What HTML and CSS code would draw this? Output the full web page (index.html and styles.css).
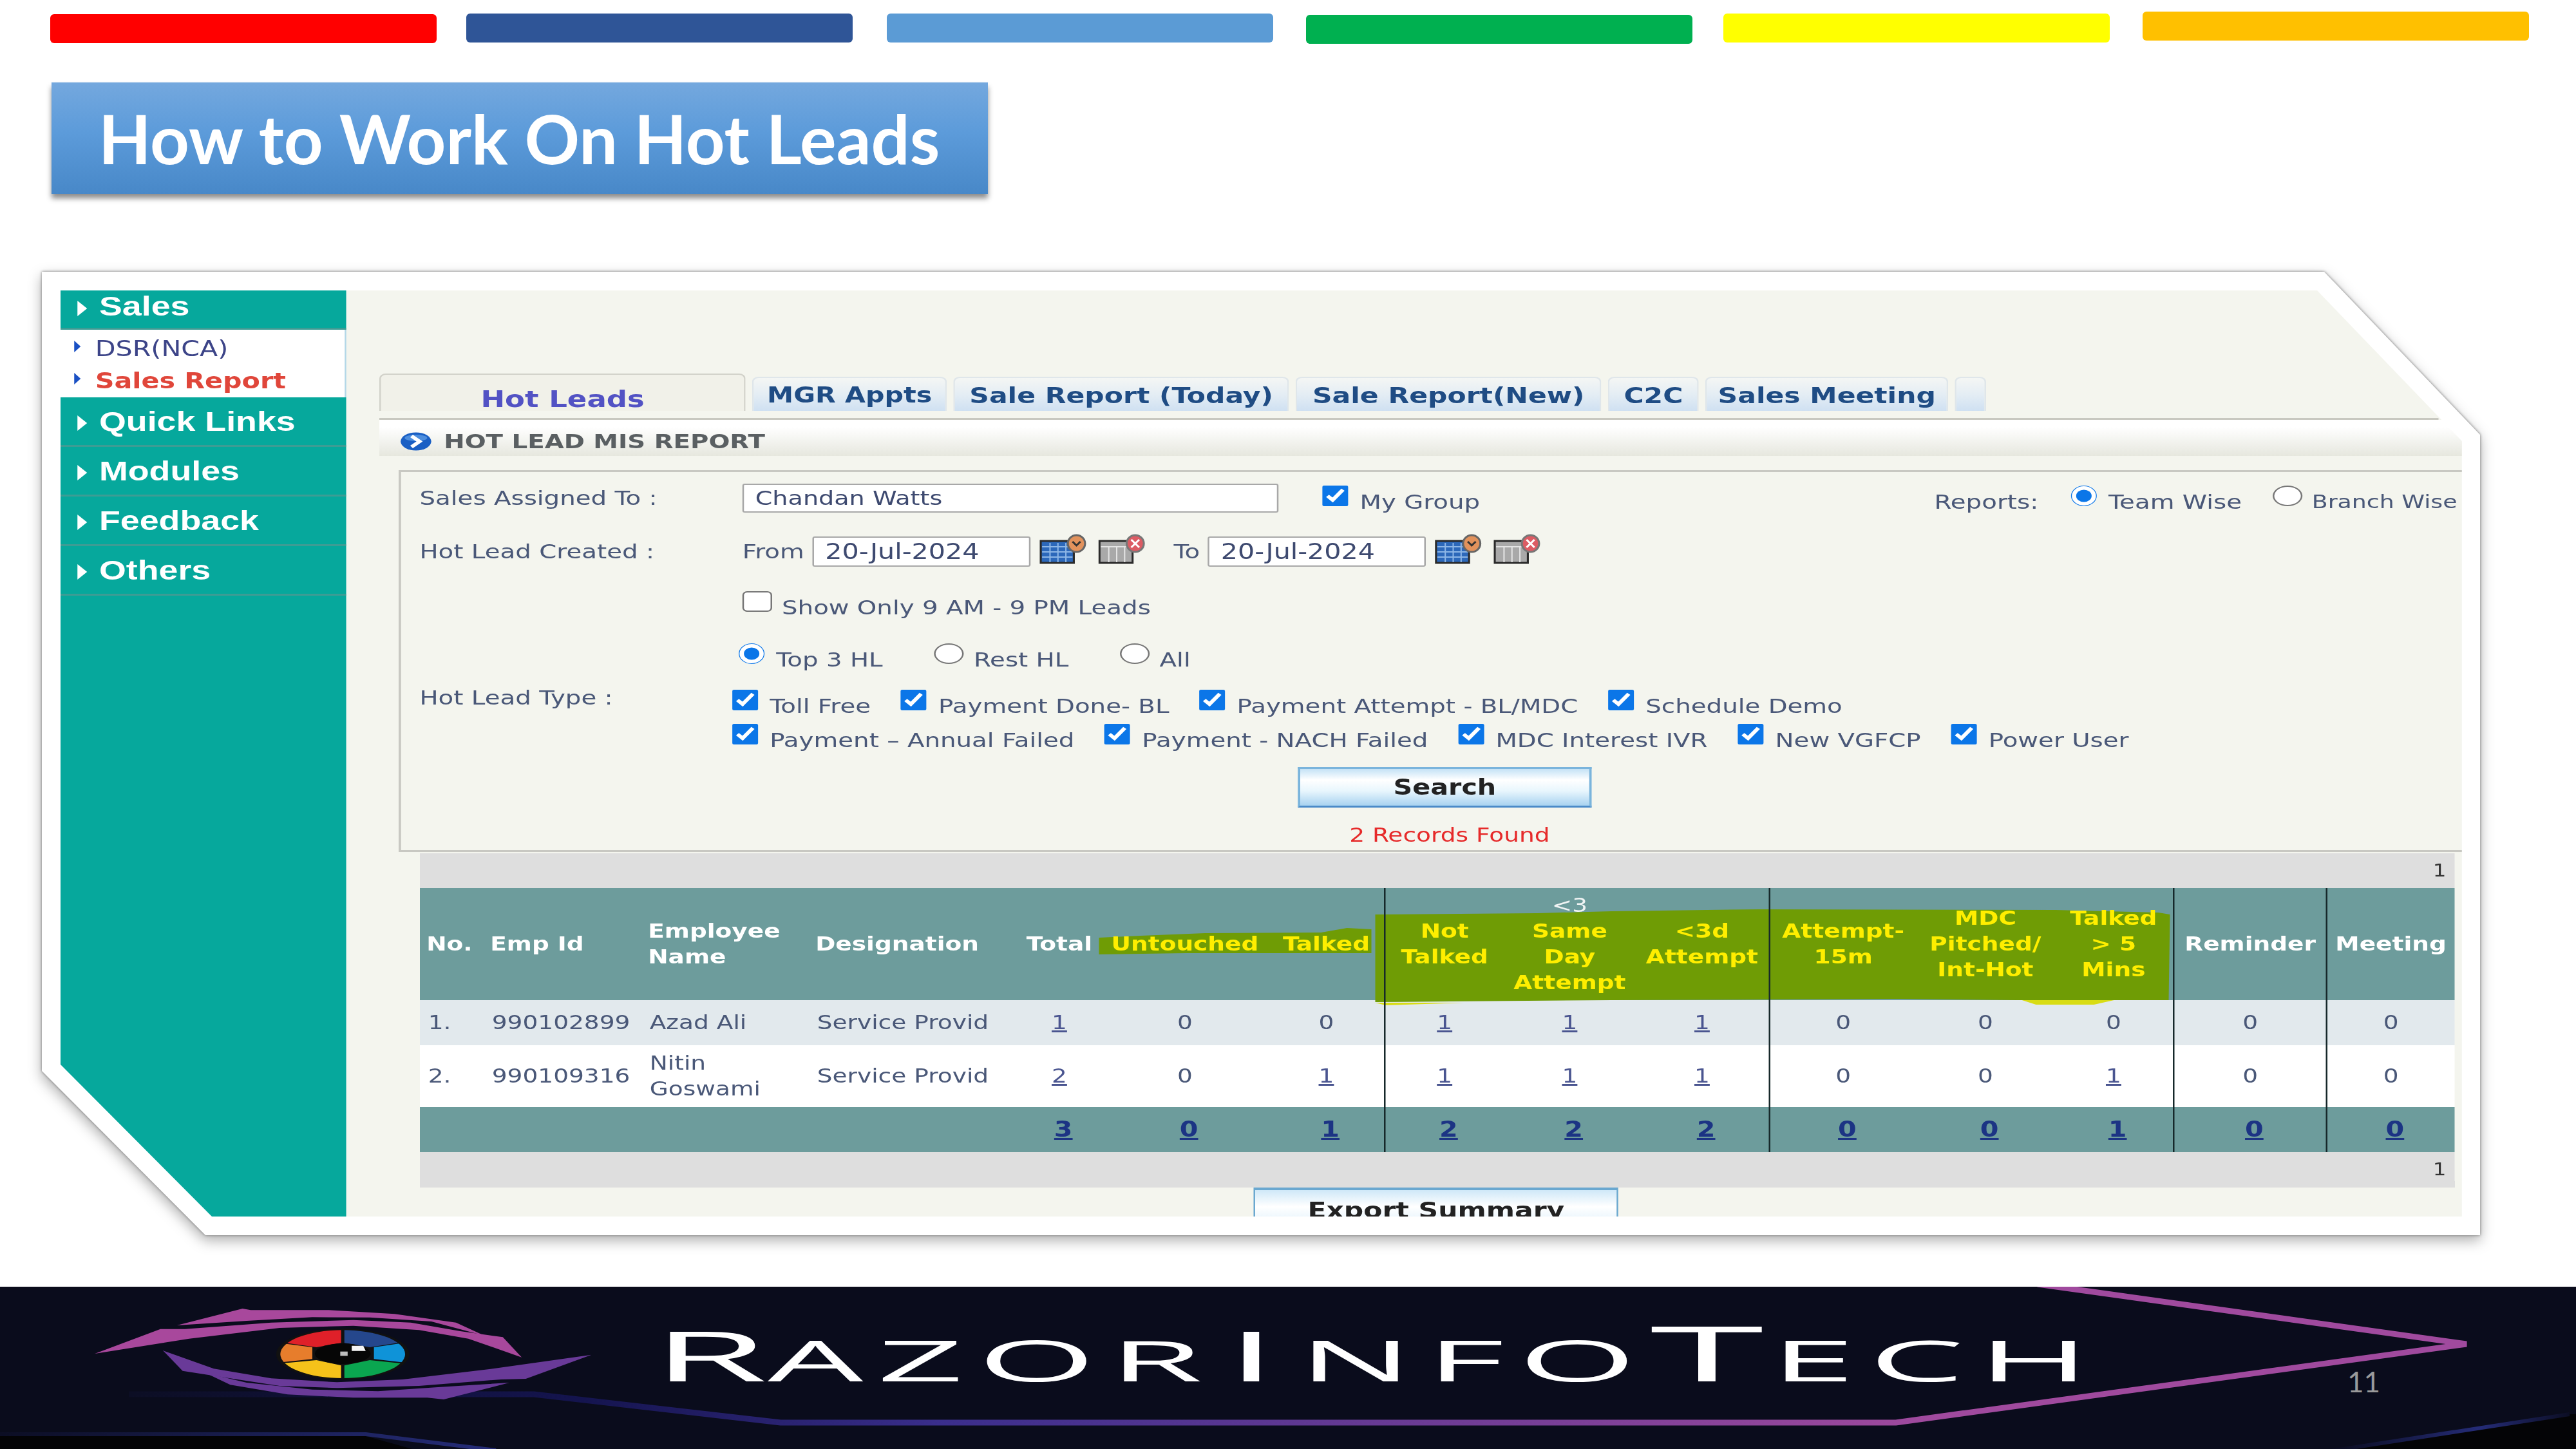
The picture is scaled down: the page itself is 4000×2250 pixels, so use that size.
FILE: index.html
```html
<!DOCTYPE html>
<html>
<head>
    <meta charset="UTF-8">
    <title>How to Work On Hot Leads</title>
    <link rel="stylesheet" href="styles.css">
</head>
<body>
<div class="slide">
    <div class="bars">
        <div class="bar bar-red"></div>
        <div class="bar bar-navy"></div>
        <div class="bar bar-sky"></div>
        <div class="bar bar-green"></div>
        <div class="bar bar-yellow"></div>
        <div class="bar bar-amber"></div>
    </div>

    <h1 class="title">How to Work On Hot Leads</h1>

    <div class="panel">
        <div class="panel-cut">
            <div class="shot">
                <div class="shot-body">
                    <!-- left menu -->
                    <div class="side">
                        <div class="side-item side-first"><span class="tri"></span>Sales</div>
                        <div class="side-sub">
                            <div class="sub-item"><span class="tri-small"></span>DSR(NCA)</div>
                            <div class="sub-item sub-on"><span class="tri-small"></span>Sales Report</div>
                        </div>
                        <div class="side-item"><span class="tri"></span>Quick Links</div>
                        <div class="side-item"><span class="tri"></span>Modules</div>
                        <div class="side-item"><span class="tri"></span>Feedback</div>
                        <div class="side-item"><span class="tri"></span>Others</div>
                    </div>

                    <div class="main">
                        <div class="tabs">
                            <div class="tab tab-on">Hot Leads</div>
                            <div class="tab tab-mgr">MGR Appts</div>
                            <div class="tab tab-today">Sale Report (Today)</div>
                            <div class="tab tab-new">Sale Report(New)</div>
                            <div class="tab tab-c2c">C2C</div>
                            <div class="tab tab-meet">Sales Meeting</div>
                            <div class="tab tab-empty"></div>
                        </div>
                        <div class="tab-rule"></div>
                        <div class="report-title">
                            <svg class="go-icon" viewBox="0 0 39 29">
                                <ellipse cx="19.5" cy="14.5" rx="19" ry="14" fill="#1a5fc4"/>
                                <ellipse cx="19.5" cy="9" rx="14" ry="5" fill="#4d8ede"/>
                                <path d="M14 6 L24 14.5 L14 23" fill="none" stroke="#fff" stroke-width="5"/>
                            </svg>
                            HOT LEAD MIS REPORT
                        </div>

                        <div class="form-box">
                            <div class="frow frow-1">
                                <div class="flabel">Sales Assigned To :</div>
                                <div class="text-box box-name">Chandan Watts</div>
                                <label class="opt opt-group"><input type="checkbox" checked>My Group</label>
                                <div class="reports">
                                    <span>Reports:</span>
                                    <label class="opt"><input type="radio" name="rep" checked>Team Wise</label>
                                    <label class="opt opt-branch"><input type="radio" name="rep">Branch Wise</label>
                                </div>
                            </div>
                            <div class="frow frow-2">
                                <div class="flabel">Hot Lead Created :</div>
                                <span>From</span>
                                <div class="text-box box-date">20-Jul-2024</div>
                                <svg class="cal" viewBox="0 0 73 47" preserveAspectRatio="none">
                                    <rect x="2" y="11" width="50" height="34" fill="#2c68ba" stroke="#2a2a2a" stroke-width="3"/>
                                    <path d="M4 20H50M4 28H50M4 36H50M16 14V44M28 14V44M40 14V44" stroke="#8db6e6" stroke-width="2"/>
                                    <circle cx="56" cy="15" r="13" fill="#e2925c" stroke="#666" stroke-width="3"/>
                                    <path d="M50 12 L56 18 L62 12" fill="none" stroke="#333" stroke-width="3"/>
                                </svg>
                                <svg class="cal cal-x" viewBox="0 0 73 47" preserveAspectRatio="none">
                                    <rect x="2" y="11" width="50" height="34" fill="#a9a9a9" stroke="#2a2a2a" stroke-width="3"/>
                                    <path d="M4 20H50M16 20V44M28 20V44M40 20V44" stroke="#e4e4e4" stroke-width="2"/>
                                    <circle cx="56" cy="15" r="13" fill="#dc5c64" stroke="#777" stroke-width="3"/>
                                    <path d="M50 9 L62 21 M62 9 L50 21" fill="none" stroke="#fff" stroke-width="3"/>
                                </svg>
                                <span class="to-label">To</span>
                                <div class="text-box box-date">20-Jul-2024</div>
                                <svg class="cal" viewBox="0 0 73 47" preserveAspectRatio="none">
                                    <rect x="2" y="11" width="50" height="34" fill="#2c68ba" stroke="#2a2a2a" stroke-width="3"/>
                                    <path d="M4 20H50M4 28H50M4 36H50M16 14V44M28 14V44M40 14V44" stroke="#8db6e6" stroke-width="2"/>
                                    <circle cx="56" cy="15" r="13" fill="#e2925c" stroke="#666" stroke-width="3"/>
                                    <path d="M50 12 L56 18 L62 12" fill="none" stroke="#333" stroke-width="3"/>
                                </svg>
                                <svg class="cal cal-x" viewBox="0 0 73 47" preserveAspectRatio="none">
                                    <rect x="2" y="11" width="50" height="34" fill="#a9a9a9" stroke="#2a2a2a" stroke-width="3"/>
                                    <path d="M4 20H50M16 20V44M28 20V44M40 20V44" stroke="#e4e4e4" stroke-width="2"/>
                                    <circle cx="56" cy="15" r="13" fill="#dc5c64" stroke="#777" stroke-width="3"/>
                                    <path d="M50 9 L62 21 M62 9 L50 21" fill="none" stroke="#fff" stroke-width="3"/>
                                </svg>
                            </div>
                            <div class="frow frow-3">
                                <div class="flabel"></div>
                                <label class="opt"><input type="checkbox">Show Only 9 AM - 9 PM Leads</label>
                            </div>
                            <div class="frow frow-4">
                                <div class="flabel"></div>
                                <div class="opt-line opt-radios">
                                    <label class="opt"><input type="radio" name="top" checked>Top 3 HL</label>
                                    <label class="opt"><input type="radio" name="top">Rest HL</label>
                                    <label class="opt"><input type="radio" name="top">All</label>
                                </div>
                            </div>
                            <div class="frow frow-5">
                                <div class="flabel flabel-type">Hot Lead Type :</div>
                                <div class="opt-lines">
                                    <div class="opt-line line-a">
                                        <label class="opt"><input type="checkbox" checked>Toll Free</label>
                                        <label class="opt"><input type="checkbox" checked>Payment Done- BL</label>
                                        <label class="opt"><input type="checkbox" checked>Payment Attempt - BL/MDC</label>
                                        <label class="opt"><input type="checkbox" checked>Schedule Demo</label>
                                    </div>
                                    <div class="opt-line line-b">
                                        <label class="opt"><input type="checkbox" checked>Payment – Annual Failed</label>
                                        <label class="opt"><input type="checkbox" checked>Payment - NACH Failed</label>
                                        <label class="opt"><input type="checkbox" checked>MDC Interest IVR</label>
                                        <label class="opt"><input type="checkbox" checked>New VGFCP</label>
                                        <label class="opt"><input type="checkbox" checked>Power User</label>
                                    </div>
                                </div>
                            </div>
                            <div class="btn btn-search">Search</div>
                            <div class="found">2 Records Found</div>
                        </div>

                        <div class="grid">
                            <svg class="marker" viewBox="0 0 3160 240" preserveAspectRatio="none">
                                <path d="M1484 232 L1622 232 L1500 236 Z" fill="#d8dc14"/>
                                <path d="M2482 226 L2640 226 L2600 235 L2510 235 Z" fill="#d8dc14"/>
                                <path d="M1055 131 L1120 128 L1220 124 L1400 123 L1440 116 L1478 118 L1478 155 L1190 155 L1055 157 Z" fill="#6f9c05"/>
                                <path d="M1484 95 L1736 93 L1851 90 L2000 88 L2080 87 L2539 88 L2700 92 L2718 95 L2716 228 L2480 228 L2300 226 L1851 228 L1600 230 L1484 231 Z" fill="#6f9c05"/>
                            </svg>
                            <div class="pager">1</div>
                            <div class="row row-head">
                                <div class="c c-l">No.</div>
                                <div class="c c-l">Emp Id</div>
                                <div class="c c-l">Employee<br>Name</div>
                                <div class="c c-l">Designation</div>
                                <div class="c">Total</div>
                                <div class="c hot">Untouched</div>
                                <div class="c hot">Talked</div>
                                <div class="c hot sep">Not<br>Talked</div>
                                <div class="c hot"><div><span class="plain">&lt;3</span><br>Same<br>Day<br>Attempt</div></div>
                                <div class="c hot">&lt;3d<br>Attempt</div>
                                <div class="c hot sep">Attempt-<br>15m</div>
                                <div class="c hot">MDC<br>Pitched/<br>Int-Hot</div>
                                <div class="c hot">Talked<br>&gt; 5<br>Mins</div>
                                <div class="c sep">Reminder</div>
                                <div class="c sep">Meeting</div>
                            </div>
                            <div class="row row-one">
                                <div class="c c-l">1.</div>
                                <div class="c c-l">990102899</div>
                                <div class="c c-l">Azad Ali</div>
                                <div class="c c-l">Service Provid</div>
                                <div class="c"><a>1</a></div>
                                <div class="c">0</div>
                                <div class="c">0</div>
                                <div class="c sep"><a>1</a></div>
                                <div class="c"><a>1</a></div>
                                <div class="c"><a>1</a></div>
                                <div class="c sep">0</div>
                                <div class="c">0</div>
                                <div class="c">0</div>
                                <div class="c sep">0</div>
                                <div class="c sep">0</div>
                            </div>
                            <div class="row row-two">
                                <div class="c c-l">2.</div>
                                <div class="c c-l">990109316</div>
                                <div class="c c-l">Nitin<br>Goswami</div>
                                <div class="c c-l">Service Provid</div>
                                <div class="c"><a>2</a></div>
                                <div class="c">0</div>
                                <div class="c"><a>1</a></div>
                                <div class="c sep"><a>1</a></div>
                                <div class="c"><a>1</a></div>
                                <div class="c"><a>1</a></div>
                                <div class="c sep">0</div>
                                <div class="c">0</div>
                                <div class="c"><a>1</a></div>
                                <div class="c sep">0</div>
                                <div class="c sep">0</div>
                            </div>
                            <div class="row row-total">
                                <div class="c"></div>
                                <div class="c"></div>
                                <div class="c"></div>
                                <div class="c"></div>
                                <div class="c"><a>3</a></div>
                                <div class="c"><a>0</a></div>
                                <div class="c"><a>1</a></div>
                                <div class="c sep"><a>2</a></div>
                                <div class="c"><a>2</a></div>
                                <div class="c"><a>2</a></div>
                                <div class="c sep"><a>0</a></div>
                                <div class="c"><a>0</a></div>
                                <div class="c"><a>1</a></div>
                                <div class="c sep"><a>0</a></div>
                                <div class="c sep"><a>0</a></div>
                            </div>
                            <div class="pager pager-low">1</div>
                        </div>
                        <div class="btn btn-export">Export Summary</div>
                    </div>
                </div>
            </div>
        </div>
    </div>

    <div class="footer">
        <svg class="footer-art" viewBox="0 1998 4000 252">
            <defs>
                <linearGradient id="trace" gradientUnits="userSpaceOnUse" x1="200" y1="0" x2="3000" y2="0">
                    <stop offset="0" stop-color="#0c0e24"/>
                    <stop offset="0.25" stop-color="#14144e"/>
                    <stop offset="0.45" stop-color="#3a2e8c"/>
                    <stop offset="1" stop-color="#a04a9e"/>
                </linearGradient>
                <linearGradient id="traceLeft" gradientUnits="userSpaceOnUse" x1="0" y1="0" x2="760" y2="0">
                    <stop offset="0" stop-color="#0c0e24"/>
                    <stop offset="1" stop-color="#252c78"/>
                </linearGradient>
                <linearGradient id="traceRight" gradientUnits="userSpaceOnUse" x1="3640" y1="0" x2="3990" y2="0">
                    <stop offset="0" stop-color="#0c0e24"/>
                    <stop offset="0.6" stop-color="#252c78"/>
                    <stop offset="1" stop-color="#0c0e24"/>
                </linearGradient>
            </defs>
            <path d="M0 2230 L568 2230 L640 2250 L0 2250 Z" fill="#040406"/>
            <path d="M0 2227 L568 2227 L770 2252" fill="none" stroke="url(#traceLeft)" stroke-width="6"/>
            <path d="M3640 2250 L3990 2196 L4000 2196 L4000 2250 Z" fill="#040406"/>
            <path d="M3600 2256 L3990 2196" fill="none" stroke="url(#traceRight)" stroke-width="6"/>
            <path d="M200 2165 L829 2165 L1212 2209 L2944 2209 L3830 2087 L3164 1994" fill="none" stroke="url(#trace)" stroke-width="9"/>
        </svg>

        <svg class="logo" viewBox="100 230 640 450" preserveAspectRatio="none">
            <defs>
                <clipPath id="iris"><ellipse cx="417" cy="457" rx="76" ry="112"/></clipPath>
            </defs>
            <path d="M215 323 L295 245 L305 252 L400 252 L480 270 L555 310 L590 372 L525 305 L450 286 L380 285 L300 302 Z" fill="#a8489c"/>
            <path d="M115 455 L195 340 L225 340 L330 310 L430 298 L500 310 L560 350 L612 378 L635 472 L570 385 L510 345 L430 325 L340 335 L230 385 Z" fill="#a8489c"/>
            <path d="M720 460 L640 572 L610 575 L510 605 L410 615 L340 605 L280 570 L222 535 L198 440 L260 525 L330 570 L410 588 L490 575 L600 525 Z" fill="#693a98"/>
            <path d="M620 590 L540 668 L520 660 L430 660 L350 645 L280 600 L250 545 L300 590 L380 622 L460 630 L530 612 Z" fill="#693a98"/>
            <ellipse cx="417" cy="457" rx="81" ry="119" fill="#111"/>
            <g clip-path="url(#iris)">
                <path d="M415 330 L330 330 L330 395 L385 425 L415 405 Z" fill="#df2029"/>
                <path d="M419 330 L500 330 L500 395 L450 425 L419 405 Z" fill="#25478c"/>
                <path d="M455 425 L500 400 L500 500 L455 480 Z" fill="#0f93d8"/>
                <path d="M450 485 L500 505 L500 580 L419 580 L419 510 Z" fill="#0aa650"/>
                <path d="M385 485 L330 505 L330 580 L415 580 L415 510 Z" fill="#f5c21a"/>
                <path d="M380 425 L330 400 L330 500 L380 480 Z" fill="#e77d2c"/>
            </g>
            <ellipse cx="417" cy="455" rx="34" ry="48" fill="#060606"/>
            <path d="M428 418 L442 418 L445 442 L428 442 Z" fill="#f4f4f4"/>
            <rect x="414" y="445" width="9" height="20" fill="#bdbdbd"/>
        </svg>

        <div class="brand"><span class="big">R</span><span class="small">AZOR</span><span class="big brand-i">I</span><span class="small">NFO</span><span class="huge">T</span><span class="small">ECH</span></div>
        <div class="page-num">11</div>
    </div>
</div>
</body>
</html>
```

FILE: styles.css
```css
body {
    margin: 0;
    background: #fff;
    font-family: "Lato", sans-serif;
}
.slide {
    width: 4000px;
    height: 2250px;
    display: flex;
    flex-direction: column;
    overflow: hidden;
}

/* colour bars */
.bars {
    display: flex;
    align-items: flex-start;
    height: 128px;
}
.bar {
    width: 600px;
    height: 45px;
    border-radius: 6px;
}
.bar-red { background: #ff0000; margin: 22px 0 0 78px; }
.bar-navy { background: #2f5597; margin: 21px 0 0 46px; }
.bar-sky { background: #5b9bd5; margin: 21px 0 0 53px; }
.bar-green { background: #00b050; margin: 23px 0 0 51px; }
.bar-yellow { background: #ffff00; margin: 21px 0 0 48px; }
.bar-amber { background: #ffc000; margin: 18px 0 0 51px; }

.title {
    width: 1454px;
    height: 173px;
    margin: 0 0 0 80px;
    box-sizing: border-box;
    padding-left: 73px;
    background: linear-gradient(180deg, #74a8de 0%, #5c9bda 45%, #4888c8 100%);
    box-shadow: 0 7px 8px rgba(0, 0, 0, 0.45);
    color: #fff;
    font-size: 106px;
    font-weight: 700;
    line-height: 173px;
    white-space: nowrap;
}

/* the pasted screenshot, corners cut */
.panel {
    width: 3786px;
    height: 1496px;
    margin: 121px 0 0 65px;
    filter: drop-shadow(0 0 2px #777) drop-shadow(0 8px 10px rgba(0, 0, 0, 0.3));
}
.panel-cut {
    height: 100%;
    box-sizing: border-box;
    padding: 29px 28px 29px 29px;
    background: #fff;
    clip-path: polygon(0 0, 3544px 0, 3786px 253px, 3786px 1496px, 254px 1496px, 0 1241px);
}
.shot {
    width: 3729px;
    height: 1438px;
    overflow: hidden;
    clip-path: polygon(0 0, 3504px 0, 3729px 234px, 3729px 1438px, 235px 1438px, 0 1202px);
}
/* the capture is stretched sideways, everything inside is laid out at 80% */
.shot-body {
    display: flex;
    width: 2983.2px;
    height: 1438px;
    transform: scaleX(1.25);
    transform-origin: 0 0;
    font-family: "DejaVu Sans", sans-serif;
    font-size: 30px;
    color: #4a5878;
}

/* left menu */
.side {
    width: 355.2px;
    flex: none;
    background: #06a89c;
}
.side-item {
    display: flex;
    align-items: center;
    height: 77px;
    box-sizing: border-box;
    padding-left: 21px;
    border-bottom: 3px solid #3d9c94;
    color: #fff;
    font-family: "Liberation Sans", sans-serif;
    font-size: 43px;
    font-weight: 700;
}
.side-first {
    height: 61px;
    align-items: flex-start;
    line-height: 48px;
}
.tri {
    width: 0;
    height: 0;
    margin: 6px 15px 0 0;
    border-top: 12px solid transparent;
    border-bottom: 12px solid transparent;
    border-left: 12px solid #fff;
}
.side-first .tri { margin-top: 16px; }
.side-sub {
    height: 105px;
    box-sizing: border-box;
    padding-top: 4px;
    background: #fff;
    border-right: 2px solid #b4d8e8;
}
.sub-item {
    display: flex;
    align-items: center;
    height: 50px;
    padding-left: 17px;
    color: #3c4488;
    font-size: 33px;
}
.sub-on {
    color: #e0463a;
    font-weight: 700;
}
.tri-small {
    width: 0;
    height: 0;
    margin: -6px 18px 0 0;
    border-top: 9px solid transparent;
    border-bottom: 9px solid transparent;
    border-left: 8px solid #1a50c4;
}

.main {
    width: 2628px;
    flex: none;
    background: #f4f5ee;
}

/* tabs */
.tabs {
    display: flex;
    align-items: flex-end;
    gap: 8px;
    height: 58px;
    margin: 129px 0 11px 41px;
}
.tab {
    height: 53px;
    box-sizing: border-box;
    padding-top: 3px;
    border: 2px solid #dfe6ea;
    border-bottom: none;
    border-radius: 8px 8px 0 0;
    background: linear-gradient(180deg, #f4f6f4 0%, #e4edf4 50%, #cfe0f2 100%);
    color: #1f4c84;
    font-size: 34px;
    font-weight: 700;
    line-height: 48px;
    text-align: center;
    white-space: nowrap;
}
.tab-on {
    width: 455px;
    height: 58px;
    padding-top: 14px;
    border-color: #d2d2ca;
    background: #f1f1e9;
    color: #5252c4;
    font-size: 36px;
}
.tab-mgr { width: 242px; font-size: 33px; }
.tab-today { width: 417px; }
.tab-new { width: 380px; }
.tab-c2c { width: 113px; }
.tab-meet { width: 302px; }
.tab-empty { width: 39px; }
.tab-rule {
    width: 2558px;
    margin-left: 41px;
    border-top: 3px solid #c8c8c0;
}
.report-title {
    display: flex;
    align-items: center;
    height: 56px;
    box-sizing: border-box;
    margin: 0 0 22px 41px;
    padding: 10px 0 0 26px;
    background: linear-gradient(180deg, #fff 0%, #fff 20%, #e6e7de 100%);
    color: #5a5f62;
    font-size: 31px;
    font-weight: 700;
    white-space: nowrap;
}
.go-icon {
    width: 39px;
    height: 29px;
    margin-right: 15px;
}

/* search form */
.form-box {
    height: 593px;
    box-sizing: border-box;
    margin: 0 0 2px 64.8px;
    padding: 12px 6px 0 23px;
    border: 3px solid #c8c8c2;
    border-right: none;
    font-size: 31px;
}
.frow {
    display: flex;
    align-items: center;
    white-space: nowrap;
}
.frow-1 { height: 56px; }
.frow-2 { height: 110px; }
.frow-3 { height: 64px; }
.frow-4 { height: 98px; }
.frow-5 {
    align-items: flex-start;
    height: 106px;
}
.flabel {
    width: 401px;
    flex: none;
}
.flabel-type { margin-top: -10px; line-height: 40px; }
.text-box {
    box-sizing: border-box;
    background: #fff;
    border: 2px solid #a8a8a8;
    border-radius: 3px;
    padding-left: 14px;
    color: #3e4a70;
}
.box-name { width: 666px; height: 45px; font-size: 30.5px; line-height: 41px; }
.box-date { width: 271px; height: 47px; margin: 0 11px 0 10px; font-size: 33px; line-height: 43px; }
.cal {
    width: 60px;
    height: 47px;
    flex: none;
    margin-top: -8px;
}
.cal-x { margin-left: 13px; }
.to-label { margin-left: 34px; }
.opt {
    display: flex;
    align-items: center;
    gap: 12px;
    line-height: 40px;
    white-space: nowrap;
}
.opt input {
    width: 37px;
    height: 32px;
    margin: 0 0 18px 0;
    flex: none;
    accent-color: #0b76e8;
}
/* unchecked boxes have a darker ring than the browser default */
.opt input:not(:checked) {
    appearance: none;
    box-sizing: border-box;
    background: #fff;
    border: 2px solid #777;
    border-radius: 6px;
}
.opt input[type="radio"]:not(:checked) { border-radius: 50%; }
.opt-group { margin: 12px 0 0 52px; }
.reports {
    display: flex;
    align-items: center;
    gap: 38px;
    margin: 12px 0 0 auto;
}
.opt-branch { font-size: 29px; }
.opt-line {
    display: flex;
    gap: 35px;
    height: 46px;
    align-items: center;
}
.opt-radios { gap: 64px; margin-left: -7px; }
.opt-lines { margin-left: -15px; }
.line-b { height: 60px; }
.btn {
    box-sizing: border-box;
    background: linear-gradient(180deg, #c4e2f6 0%, #fff 30%, #e8f6fd 60%, #a8d2f0 100%);
    color: #222;
    font-weight: 700;
    text-align: center;
}
.btn-search {
    width: 365px;
    height: 63px;
    margin: 12px 0 0 1091px;
    border: 3px solid #7ab4dc;
    border-bottom-color: #4a8ac8;
    font-size: 33px;
    line-height: 57px;
}
.found {
    margin: 23px 0 0 1097px;
    width: 365px;
    color: #e62a2a;
    font-size: 30px;
    text-align: center;
    line-height: 40px;
    white-space: nowrap;
}

/* result grid */
.grid {
    position: relative;
    width: 2528px;
    margin-left: 90.4px;
}
.marker {
    position: absolute;
    top: 0;
    left: 0;
    width: 2528px;
    height: 240px;
    z-index: 0;
}
.pager {
    height: 54px;
    box-sizing: border-box;
    padding-right: 10px;
    background: #dedede;
    color: #333;
    font-size: 26px;
    line-height: 54px;
    text-align: right;
}
.pager-low { height: 55px; line-height: 55px; }
.row {
    display: grid;
    grid-template-columns: 79.2px 196px 208px 260px 104px 208px 143.2px 148.8px 164px 164.8px 184px 171.2px 147.2px 190.4px 159.2px;
}
.c {
    position: relative;
    z-index: 1;
    display: flex;
    align-items: center;
    justify-content: center;
    box-sizing: border-box;
    text-align: center;
    line-height: 40px;
    white-space: nowrap;
}
.c-l {
    justify-content: flex-start;
    padding-left: 9px;
    text-align: left;
}
.sep { border-left: 2.4px solid #16282a; }
.row-head {
    height: 174px;
    background: #6d9c9c;
}
.row-head .c { color: #fff; font-weight: 700; }
.row-head .hot { color: #ffee00; }
.row-head .plain { color: #f0f4f4; font-weight: 400; }
.row-one { height: 70px; background: #e2e9ed; }
.row-two { height: 96px; background: #fff; }
.row-one .c-l, .row-two .c-l { padding-left: 11px; }
.row-total { height: 70px; background: #6d9c9c; }
.row a { color: #4a5590; text-decoration: underline; }
.row-total a {
    margin-left: 10px;
    color: #1c3484;
    font-size: 33px;
    font-weight: 700;
}
.btn-export {
    width: 453px;
    height: 70px;
    margin-left: 1127px;
    border: 2px solid #6aa8d0;
    border-top-width: 4px;
    background: linear-gradient(180deg, #cfe8f8 0%, #fff 40%, #d8eefb 100%);
    font-size: 34px;
    line-height: 62px;
}

/* footer strip */
.footer {
    position: relative;
    height: 252px;
    margin-top: auto;
    background: #0a0c1c;
    overflow: hidden;
}
.footer-art {
    position: absolute;
    top: 0;
    left: 0;
    width: 4000px;
    height: 252px;
}
.logo {
    position: absolute;
    top: 29px;
    left: 128px;
    width: 816px;
    height: 150px;
}
.brand {
    position: absolute;
    left: 1012px;
    top: 36px;
    display: flex;
    align-items: baseline;
    color: #fff;
    font-family: "Open Sans", sans-serif;
    font-weight: 500;
    line-height: 130px;
    white-space: nowrap;
    transform: scaleX(2.7);
    transform-origin: 0 0;
}
.big { font-size: 108px; }
.small { font-size: 87px; letter-spacing: 8px; }
.huge { font-size: 119px; margin-right: 4px; }
.brand-i { margin: 0 12px 0 5px; }
.page-num {
    position: absolute;
    left: 3645px;
    top: 121px;
    color: #9a9a9a;
    font-size: 44px;
}
```
